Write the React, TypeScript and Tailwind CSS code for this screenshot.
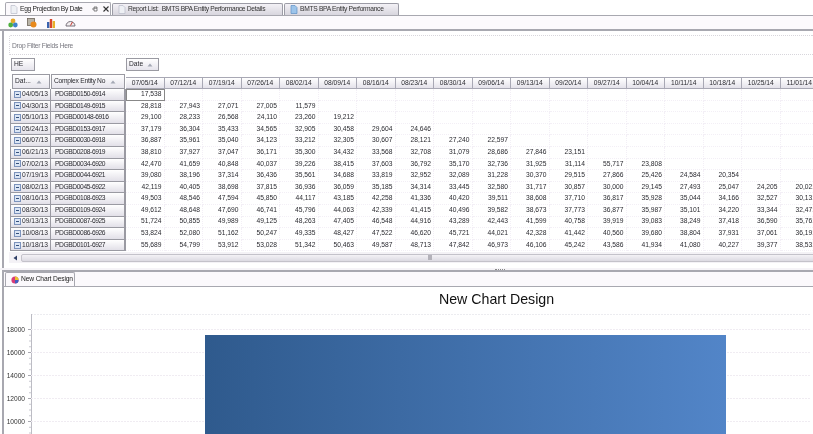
const dates = ["07/05/14","07/12/14","07/19/14","07/26/14","08/02/14","08/09/14","08/16/14","08/23/14","08/30/14","09/06/14","09/13/14","09/20/14","09/27/14","10/04/14","10/11/14","10/18/14","10/25/14","11/01/14"]

const rows: [string, string, string][] = [
  ["04/05/13", "PDGBD0150-6914", "17,538"],
  ["04/30/13", "PDGBD0149-6915", "28,818 27,943 27,071 27,005 11,579"],
  ["05/10/13", "PDGBD00148-6916", "29,100 28,233 26,568 24,110 23,260 19,212"],
  ["05/24/13", "PDGBD0153-6917", "37,179 36,304 35,433 34,565 32,905 30,458 29,604 24,646"],
  ["06/07/13", "PDGBD0030-6918", "36,887 35,961 35,040 34,123 33,212 32,305 30,607 28,121 27,240 22,597"],
  ["06/21/13", "PDGBD0208-6919", "38,810 37,927 37,047 36,171 35,300 34,432 33,568 32,708 31,079 28,686 27,846 23,151"],
  ["07/02/13", "PDGBD0034-6920", "42,470 41,659 40,848 40,037 39,226 38,415 37,603 36,792 35,170 32,736 31,925 31,114 55,717 23,808"],
  ["07/19/13", "PDGBD0044-6921", "39,080 38,196 37,314 36,436 35,561 34,688 33,819 32,952 32,089 31,228 30,370 29,515 27,866 25,426 24,584 20,354"],
  ["08/02/13", "PDGBD0045-6922", "42,119 40,405 38,698 37,815 36,936 36,059 35,185 34,314 33,445 32,580 31,717 30,857 30,000 29,145 27,493 25,047 24,205 20,021"],
  ["08/16/13", "PDGBD0108-6923", "49,503 48,546 47,594 45,850 44,117 43,185 42,258 41,336 40,420 39,511 38,608 37,710 36,817 35,928 35,044 34,166 32,527 30,131"],
  ["08/30/13", "PDGBD0109-6924", "49,612 48,648 47,690 46,741 45,796 44,063 42,339 41,415 40,496 39,582 38,673 37,773 36,877 35,987 35,101 34,220 33,344 32,471"],
  ["09/13/13", "PDGBD0087-6925", "51,724 50,855 49,989 49,125 48,263 47,405 46,548 44,916 43,289 42,443 41,599 40,758 39,919 39,083 38,249 37,418 36,590 35,761"],
  ["10/08/13", "PDGBD0086-6926", "53,824 52,080 51,162 50,247 49,335 48,427 47,522 46,620 45,721 44,021 42,328 41,442 40,560 39,680 38,804 37,931 37,061 36,191"],
  ["10/18/13", "PDGBD0101-6927", "55,689 54,799 53,912 53,028 51,342 50,463 49,587 48,713 47,842 46,973 46,106 45,242 43,586 41,934 41,080 40,227 39,377 38,531"],
]

function DocIcon({ blue }: { blue?: boolean }) {
  return (
    <svg width="8" height="9" viewBox="0 0 8 9" className="shrink-0">
      <path d="M1 .5h4l2 2v6H1z" fill={blue ? "#9cc4ea" : "#eef0f4"} stroke={blue ? "#5f8fc4" : "#b9bcc8"} strokeWidth=".7" />
    </svg>
  )
}

function SortArrow() {
  return (
    <svg width="6" height="4" viewBox="0 0 6 4" className="shrink-0">
      <path d="M3 .5 5.5 3.5H.5z" fill="#a4a8b4" />
    </svg>
  )
}

function FieldButton({ label, width, sort }: { label: string; width: string; sort?: boolean }) {
  return (
    <div className={`${width} flex h-[13px] items-center gap-[4px] border border-[#9a9aa2] bg-gradient-to-b from-white to-[#e6e4ec] pl-[2px] shrink-0`}>
      <span>{label}</span>
      {sort && <SortArrow />}
    </div>
  )
}

function TopTabs() {
  return (
    <div className="flex h-[16px] shrink-0 items-end whitespace-nowrap border-b border-[#a8a8b0] bg-white pl-[5px] tracking-[-0.3px]">
      <div className="flex h-[13px] w-[106px] items-center gap-[2px] rounded-t-[2px] border border-b-0 border-[#a8a8b0] bg-[#fbf9fc] pl-[4px]">
        <DocIcon />
        <span className="text-[#222]">Egg Projection By Date</span>
        <svg width="6" height="6" viewBox="0 0 6 6" className="ml-[7px] shrink-0">
          <path d="M0 3h2M2 1v4h3V1zM2 2.2h3" stroke="#555" strokeWidth=".7" fill="none" />
        </svg>
        <svg width="6" height="6" viewBox="0 0 6 6" className="ml-[3px] shrink-0">
          <path d="M.5.5l5 5M5.5.5l-5 5" stroke="#333" strokeWidth="1.1" />
        </svg>
      </div>
      <div className="ml-[1px] flex h-[12px] w-[171px] items-center gap-[2px] rounded-t-[2px] border border-b-0 border-[#9c9ca6] bg-gradient-to-b from-[#f3f1f6] to-[#d8d6de] pl-[5px]">
        <DocIcon />
        <span className="text-[#333]">Report List:&nbsp; BMTS BPA Entity Performance Details</span>
      </div>
      <div className="ml-[1px] flex h-[12px] w-[115px] items-center gap-[2px] rounded-t-[2px] border border-b-0 border-[#9c9ca6] bg-gradient-to-b from-[#f3f1f6] to-[#d8d6de] pl-[5px]">
        <DocIcon blue />
        <span className="text-[#333]">BMTS BPA Entity Performance</span>
      </div>
    </div>
  )
}

function Toolbar() {
  return (
    <div className="flex h-[15px] shrink-0 items-center gap-[9px] border-b-2 border-[#a8a8b0] bg-[#fcfafd] pl-[8px]">
      <svg width="10" height="10" viewBox="0 0 10 10">
        <circle cx="5" cy="3" r="2.4" fill="#e8a82a" />
        <circle cx="2.7" cy="7" r="2.4" fill="#4caf3c" />
        <circle cx="7.3" cy="7" r="2.4" fill="#3f83c9" />
      </svg>
      <svg width="10" height="10" viewBox="0 0 10 10">
        <rect x=".5" y=".5" width="7" height="7" fill="#b9b4a8" stroke="#6e655a" strokeWidth=".8" />
        <circle cx="6.5" cy="6.5" r="3" fill="#e8891c" />
      </svg>
      <svg width="10" height="10" viewBox="0 0 10 10">
        <rect x="1" y="4" width="2.4" height="6" fill="#3a64b0" />
        <rect x="3.8" y="1" width="2.4" height="9" fill="#d8442c" />
        <rect x="6.6" y="3" width="2.4" height="7" fill="#e8b02a" />
      </svg>
      <svg width="11" height="8" viewBox="0 0 11 8">
        <path d="M1 7a4.5 4.5 0 0 1 9 0z" fill="#f2eef0" stroke="#77707a" strokeWidth="1" />
        <path d="M5.5 6.5 7.5 3" stroke="#c8362c" strokeWidth="1" />
      </svg>
    </div>
  )
}

function PivotGrid() {
  return (
    <div className="ml-[2px] flex h-[237px] shrink-0 flex-col border-l-2 border-[#a8a8b0] bg-white pl-[5px] pt-[4px]">
      <div className="flex h-[20px] shrink-0 items-center rounded-tl-[2px] border-b border-l border-t border-dotted border-[#d8d6dc] pl-[2px] pt-[2px] tracking-[-0.27px] text-[#77777f]">
        Drop Filter Fields Here
      </div>
      <div className="mt-[3px] flex h-[13px] shrink-0">
        <div className="w-[117px] shrink-0 pl-[2px]">
          <FieldButton label="HE" width="w-[24px]" />
        </div>
        <FieldButton label="Date" width="w-[33px]" sort />
      </div>
      <div className="mt-[3px] flex h-[15px] shrink-0 items-end">
        <div className="flex h-[15px] w-[117px] shrink-0 gap-[1px] pl-[3px]">
          <div className="flex w-[38px] items-center gap-[5px] border border-[#9a9aa2] bg-gradient-to-b from-white to-[#e6e4ec] pl-[2px]">
            <span>Dat...</span>
            <SortArrow />
          </div>
          <div className="flex w-[74px] items-center gap-[5px] border border-[#9a9aa2] bg-gradient-to-b from-white to-[#e6e4ec] pl-[2px]">
            <span className="whitespace-nowrap tracking-[-0.25px]">Complex Entity No</span>
            <SortArrow />
          </div>
        </div>
        <div className="flex">
          {dates.map((d) => (
            <div key={d} className="flex h-[12px] w-[38.5px] shrink-0 items-center justify-center border-b border-r border-t border-[#a8a8b4] bg-gradient-to-b from-white to-[#e4e2ea]">
              {d}
            </div>
          ))}
        </div>
      </div>
      <div className="min-h-0 flex-1 overflow-hidden">
        {rows.map(([date, entity, values], i) => {
          const cells = values.split(" ")
          return (
            <div key={entity} className="flex h-[11.6px]">
              <div className="flex w-[117px] shrink-0 pl-[1px]">
                <div className="flex w-[41px] items-center gap-[1px] border-b border-l border-r border-[#9a9aa2] bg-gradient-to-b from-white to-[#e2e0e8] pl-[3px]">
                  <span className="flex h-[7px] w-[7px] shrink-0 items-center justify-center border border-[#7c93bc] bg-[#dbe5f4]">
                    <span className="h-px w-[3px] bg-[#33507e]" />
                  </span>
                  <span>{date}</span>
                </div>
                <div className="flex flex-1 items-center whitespace-nowrap border-b border-r-2 border-[#9a9aa2] bg-gradient-to-b from-white to-[#e2e0e8] pl-[4px] tracking-[-0.4px]">
                  {entity}
                </div>
              </div>
              {dates.map((d, j) => (
                <div
                  key={d}
                  className={
                    i === 0 && j === 0
                      ? "flex w-[38.5px] shrink-0 items-center justify-end border border-[#888] pr-[2px]"
                      : "flex w-[38.5px] shrink-0 items-center justify-end border-b border-r border-dotted border-[#f3eff6] pr-[2px]"
                  }
                >
                  {cells[j]}
                </div>
              ))}
            </div>
          )
        })}
      </div>
      <div className="mb-[5px] flex h-[11px] shrink-0 items-center bg-[#f4f2f6] pl-[4px]">
        <svg width="5" height="6" viewBox="0 0 5 6" className="shrink-0">
          <path d="M4 .5v5L.5 3z" fill="#2f3f66" />
        </svg>
        <div className="ml-[3px] mr-[-25px] flex h-[8px] flex-1 items-center justify-center rounded-[2px] border border-[#c4c2ca] bg-gradient-to-b from-[#f4f2f6] to-[#dcdae2]">
          <span className="h-[5px] w-[4px] bg-[#b4b2ba]" />
        </div>
      </div>
    </div>
  )
}

function Chart() {
  const ticks: [string, number][] = [["18000", 18], ["16000", 41], ["14000", 64], ["12000", 87], ["10000", 110]]
  return (
    <svg width="806" height="130" viewBox="0 0 806 130" className="block shrink-0">
      <defs>
        <linearGradient id="bar" x1="0" x2="1" y1="0" y2="0">
          <stop offset="0" stopColor="#2f5a8d" />
          <stop offset="1" stopColor="#5285c8" />
        </linearGradient>
      </defs>
      <path d="M27 3.5H806" stroke="#ececf0" strokeDasharray="2 1" />
      <path d="M27.5 3V130" stroke="#bcbcc4" />
      {ticks.map(([label, y]) => (
        <g key={label}>
          <path d={`M27 ${y + 0.5}H806`} stroke="#f0ecf2" strokeDasharray="2 1" />
          <path d={`M24 ${y + 0.5}H27`} stroke="#a8a8b0" />
          <path d={`M25 ${y + 6.25}H27M25 ${y + 12}H27M25 ${y + 17.75}H27`} stroke="#c8c8d0" />
          <text x="21" y={y + 2.5} textAnchor="end" fontSize="6.6" fill="#333" fontFamily="Liberation Sans">{label}</text>
        </g>
      ))}
      <rect x="201" y="24" width="521" height="106" fill="url(#bar)" />
    </svg>
  )
}

export default function App() {
  return (
    <div className="flex h-[434px] w-[813px] flex-col overflow-hidden bg-white font-['Liberation_Sans',sans-serif] text-[6.7px] leading-none text-[#2a2a30] blur-[0.3px]">
      <TopTabs />
      <Toolbar />
      <PivotGrid />
      <div className="flex h-[2px] shrink-0 items-center justify-center bg-[#f6f4f8] pl-[186px]">
        <span className="h-px w-[10px] border-t border-dotted border-[#888]" />
      </div>
      <div className="ml-[2px] flex min-h-0 flex-1 flex-col border-l-2 border-t-2 border-[#a8a8b0]">
        <div className="flex h-[15px] shrink-0 items-end border-b border-[#a8a8b0] bg-[#fbf9fc] pl-[1px]">
          <div className="flex h-[14px] w-[70px] items-center gap-[2px] whitespace-nowrap rounded-t-[2px] border border-b-0 border-[#a8a8b0] bg-[#fbf9fc] pl-[5px] tracking-[-0.15px] text-[#222]">
            <svg width="8" height="8" viewBox="0 0 8 8" className="shrink-0">
              <circle cx="4" cy="4" r="3.6" fill="#d83a78" />
              <path d="M4 4V.4A3.6 3.6 0 0 1 7.6 4z" fill="#e8c02a" />
              <path d="M4 4H7.6A3.6 3.6 0 0 1 4 7.6z" fill="#3f5fc0" />
            </svg>
            <span>New Chart Design</span>
          </div>
        </div>
        <div className="flex h-[24px] shrink-0 items-center justify-center pl-[176px] text-[14.2px] text-[#111]">
          New Chart Design
        </div>
        <Chart />
      </div>
    </div>
  )
}
